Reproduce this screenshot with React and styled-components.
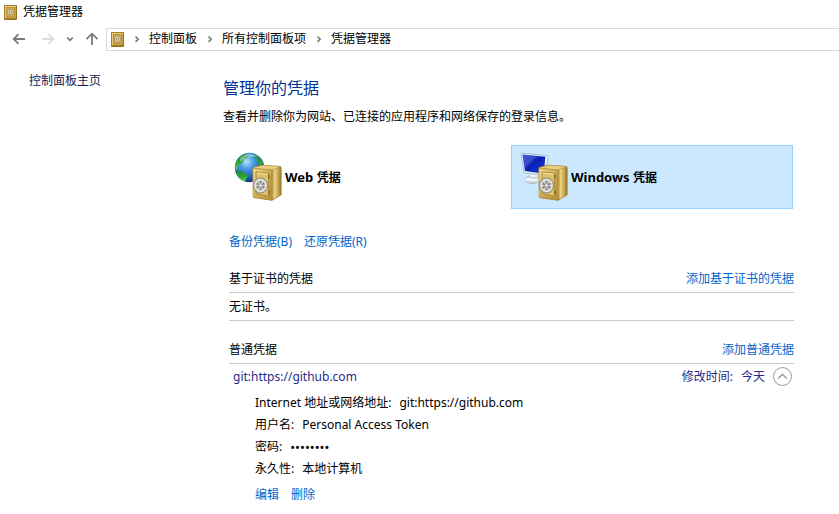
import React from "react";
import styled, { createGlobalStyle } from "styled-components";

const GlobalStyle = createGlobalStyle`
  *, *::before, *::after { box-sizing: border-box; }
  body {
    margin: 0;
    background: #fff;
    color: #000;
    font-family: "Noto Sans", "Noto Sans CJK SC", sans-serif;
    font-size: 12px;
    line-height: 20px;
  }
  h1, h2, p, dl, dd, dt, ol { margin: 0; padding: 0; }
  svg { display: block; flex: none; }
`;

const TitleBar = styled.header`
  display: flex;
  align-items: center;
  gap: 6px;
  height: 24px;
  padding-left: 4px;
`;

const NavBar = styled.nav`
  display: flex;
  align-items: center;
  height: 30px;
`;

const NavButtons = styled.div`
  display: flex;
  align-items: center;
  gap: 10px;
  width: 106px;
  flex: none;
  padding-left: 11px;
`;

const NavButton = styled.button`
  display: flex;
  align-items: center;
  justify-content: center;
  width: ${(p) => (p.$narrow ? "8px" : "16px")};
  height: 20px;
  padding: 0;
  border: 0;
  background: none;
  color: ${(p) => (p.disabled ? "#dcdcdc" : "#7b7b7b")};
`;

const NavGroup = styled.div`
  display: flex;
  gap: 13px;
`;

const Address = styled.ol`
  display: flex;
  align-items: center;
  flex: 1;
  height: 23px;
  padding-left: 4px;
  border: 1px solid #d9d9d9;
  border-right: 0;
  list-style: none;
`;

const Crumb = styled.li`
  display: flex;
  align-items: center;
  white-space: nowrap;
`;

const CrumbLink = styled.a`
  color: #000;
  text-decoration: none;
`;

const Separator = styled.span`
  display: flex;
  justify-content: center;
  width: 25px;
  color: #7b7b7b;
`;

const Body = styled.div`
  display: flex;
`;

const Sidebar = styled.aside`
  flex: none;
  width: 223px;
  padding: 17px 0 0 29px;
`;

const Main = styled.main`
  flex: 1;
  min-width: 0;
  padding: 22px 45px 8px 0;
`;

const Heading = styled.h1`
  color: #003399;
  font-size: 16px;
  font-weight: 400;
  line-height: 24px;
`;

const Intro = styled.p`
  margin-top: 7px;
`;

const Vaults = styled.div`
  display: grid;
  grid-template-columns: 1fr 1fr;
  gap: 4px;
  margin: 18px 1px 0 2px;
`;

const VaultButton = styled.button`
  display: flex;
  align-items: center;
  gap: 2px;
  height: 64px;
  padding: 0 8px;
  border: 1px solid ${(p) => (p.$selected ? "#99d1ff" : "transparent")};
  background: ${(p) => (p.$selected ? "#cce8ff" : "transparent")};
  color: #000;
  font: inherit;
  font-weight: 700;
`;

const Content = styled.div`
  padding-left: 6px;
`;

const Link = styled.a`
  color: ${(p) => (p.$dark ? "#151c55" : "#0066cc")};
  text-decoration: none;
`;

const Links = styled.div`
  display: flex;
  gap: 12px;
  margin-top: ${(p) => (p.$compact ? "5px" : "23px")};
`;

const Section = styled.section`
  margin-top: ${(p) => (p.$spaced ? "19px" : "17px")};
`;

const SectionHeader = styled.div`
  display: flex;
  justify-content: space-between;
  padding-bottom: 3px;
  border-bottom: 1px solid #cbcbcb;
`;

const SectionTitle = styled.h2`
  font-size: 12px;
  font-weight: 400;
`;

const EmptyRow = styled.p`
  padding: 4px 0 3px;
  border-bottom: 1px solid #cbcbcb;
`;

const EntryButton = styled.button`
  display: flex;
  align-items: center;
  width: 100%;
  height: 26px;
  padding: 0 1px 0 4px;
  border: 0;
  background: none;
  color: #272c86;
  font: inherit;
`;

const LargeText = styled.span`
  font-size: 13px;
`;

const Modified = styled.span`
  margin: 0 8px 0 auto;
`;

const Gap = styled.span`
  display: inline-block;
  width: 8px;
`;

const Details = styled.div`
  padding: 2px 0 0 26px;
`;

const DetailRow = styled.div`
  display: flex;
  gap: 8px;
  height: 22px;
  line-height: 22px;
`;

const DetailList = ({ items }) => (
  <dl>
    {items.map((item) => (
      <DetailRow key={item.label}>
        <dt>{item.label}:</dt>
        <dd>{item.large ? <LargeText>{item.value}</LargeText> : item.value}</dd>
      </DetailRow>
    ))}
  </dl>
);

const SmallSafe = () => (
  <svg width="13" height="15" viewBox="0 0 13 15" aria-hidden="true">
    <rect x="0" y="0" width="13" height="15" rx="1" fill="#94701f" />
    <rect x="0.7" y="0.7" width="11.3" height="12.6" fill="#c9a348" />
    <path d="M1 1h11v1H2v11H1z" fill="#e5cc7c" />
    <rect x="2.5" y="2.5" width="8" height="9" fill="#cfae5a" stroke="#b58e38" strokeWidth="0.8" />
    <circle cx="6.5" cy="7" r="3" fill="#e8dcae" stroke="#a08a4c" strokeWidth="0.8" />
    <circle cx="6.5" cy="7" r="1.6" fill="#96907c" />
    <circle cx="6.5" cy="7" r="0.7" fill="#f4f0dc" />
  </svg>
);

const Arrow = ({ up }) => (
  <svg width="14" height="14" viewBox="0 0 14 14" fill="none" stroke="currentColor" strokeWidth="1.8" aria-hidden="true">
    {up ? <path d="M7 13V2M1.5 7.2L7 1.7l5.5 5.5" /> : <path d="M13 7H2M6.5 2.2L1.7 7l4.8 4.8" />}
  </svg>
);

const ForwardArrow = () => (
  <svg width="14" height="14" viewBox="0 0 14 14" fill="none" stroke="currentColor" strokeWidth="1.8" aria-hidden="true">
    <path d="M1 7h11M7.5 2.2L12.3 7l-4.8 4.8" />
  </svg>
);

const Chevron = ({ down }) => (
  <svg width="8" height="8" viewBox="0 0 8 8" fill="none" stroke="currentColor" strokeWidth="1.6" aria-hidden="true">
    <path d={down ? "M1.2 2.6L4 5.4l2.8-2.8" : "M2.5 1.5L5.2 4.2l-2.7 2.7"} />
  </svg>
);

const CollapseIcon = () => (
  <svg width="20" height="20" viewBox="0 0 20 20" fill="none" aria-hidden="true">
    <circle cx="9.5" cy="9.5" r="9" stroke="#9a9a9a" />
    <path d="M5.3 11.5L9.5 7.3l4.2 4.2" stroke="#a0a0a0" strokeWidth="1.6" />
  </svg>
);

const Safe = ({ id }) => (
  <g>
    <defs>
      <linearGradient id={`${id}-front`} x1="0" y1="0" x2="1" y2="1">
        <stop offset="0" stopColor="#f1dd95" />
        <stop offset="0.5" stopColor="#d3b254" />
        <stop offset="1" stopColor="#b4903a" />
      </linearGradient>
      <linearGradient id={`${id}-side`} x1="0" y1="0" x2="1" y2="0">
        <stop offset="0" stopColor="#a8853a" />
        <stop offset="0.3" stopColor="#ead486" />
        <stop offset="0.65" stopColor="#cdab52" />
        <stop offset="1" stopColor="#9a7529" />
      </linearGradient>
      <radialGradient id={`${id}-wheel`}>
        <stop offset="0" stopColor="#ffffff" />
        <stop offset="0.55" stopColor="#8d9190" />
        <stop offset="0.8" stopColor="#e4e5e1" />
        <stop offset="1" stopColor="#8e8d83" />
      </radialGradient>
    </defs>
    <path d="M18.5 16Q19 14.5 29 12.8L46 14q1.6 0.5 1.6 2L47.6 43 38 48.8 19.5 46z" fill="#a07c31" />
    <path d="M19 15.8L29.5 13.3 46.8 14.7 37.5 17.8z" fill="#e4cd80" />
    <path d="M37.8 18l9.2-3V42.8L37.8 48z" fill={`url(#${id}-side)`} />
    <path d="M19 16.3L37.3 18.3v29.4L19 45z" fill={`url(#${id}-front)`} stroke="#bb9840" strokeWidth="0.7" />
    <path d="M22 19.8L34.6 21.3v23L22 42z" fill="#dcc06a" stroke="#a17d33" strokeWidth="0.8" />
    <path d="M23 21L33.8 22.3" stroke="#fff0b2" strokeWidth="0.8" />
    <path d="M35 22.5v4M35 38.5v4" stroke="#7d6228" strokeWidth="1.3" />
    <ellipse cx="26.5" cy="33.5" rx="7.2" ry="7.7" fill={`url(#${id}-wheel)`} stroke="#85837a" strokeWidth="0.6" />
    <ellipse cx="26.5" cy="33.5" rx="4.9" ry="5.3" fill="#8d8b83" stroke="#f2f2ed" strokeWidth="1" />
    <path d="M20.3 33.5h12.4M23.5 28l6 11M29.5 28l-6 11" stroke="#e3e5e5" strokeWidth="1.2" />
    <circle cx="26.5" cy="33.5" r="1.9" fill="#e5e7e7" stroke="#707576" strokeWidth="0.6" />
  </g>
);

const WebVaultIcon = () => (
  <svg width="49" height="50" viewBox="0 0 49 50" aria-hidden="true">
    <defs>
      <radialGradient id="globe" cx="0.4" cy="0.3" r="0.7">
        <stop offset="0" stopColor="#b4e3ff" />
        <stop offset="0.35" stopColor="#4a9de2" />
        <stop offset="0.75" stopColor="#1b60b8" />
        <stop offset="1" stopColor="#12377e" />
      </radialGradient>
      <linearGradient id="land" x1="0" y1="0" x2="0" y2="1">
        <stop offset="0" stopColor="#238b32" />
        <stop offset="0.6" stopColor="#2ea833" />
        <stop offset="1" stopColor="#72e044" />
      </linearGradient>
    </defs>
    <circle cx="15.5" cy="15.5" r="14.7" fill="url(#globe)" />
    <path d="M2 10C4 5 8 2.3 13 1.5L11 4l4-1-1 3-4 1-2 4-4 2-1 5-2-2z" fill="url(#land)" />
    <path d="M1.5 19l5.5 0 4 3 4 1-3 4-1 2.5C6 27.5 2.5 24 1.5 19z" fill="url(#land)" />
    <path d="M20 2c5 2 8 6 9.5 10L26 13l-3-3 1-3-4-2zM25 14l5 1-1 5-4-2z" fill="url(#land)" />
    <path d="M6 6c5-5 13-5 18-1-6-1-12 0-18 5z" fill="#d6f2ff" opacity="0.4" />
    <Safe id="web-safe" />
  </svg>
);

const WindowsVaultIcon = () => (
  <svg width="49" height="50" viewBox="0 0 49 50" aria-hidden="true">
    <defs>
      <linearGradient id="screen" x1="0" y1="0" x2="1" y2="1">
        <stop offset="0" stopColor="#2b48d6" />
        <stop offset="0.5" stopColor="#0a1fb4" />
        <stop offset="1" stopColor="#1c45d2" />
      </linearGradient>
      <linearGradient id="stand" x1="0" y1="0" x2="0" y2="1">
        <stop offset="0" stopColor="#a9b5bd" />
        <stop offset="0.5" stopColor="#f7fbfd" />
        <stop offset="1" stopColor="#b4bfc7" />
      </linearGradient>
    </defs>
    <ellipse cx="12.5" cy="27.5" rx="7.5" ry="4.2" fill="url(#stand)" stroke="#a5b2bc" strokeWidth="0.5" />
    <path d="M10 20l8 2-1 5-7-1z" fill="url(#stand)" />
    <path d="M1 2.2Q1 1 2.2 1L27 3.6 28.3 4.6 26 24 4 20.8z" fill="#e6eef4" stroke="#9cabba" strokeWidth="0.7" />
    <path d="M2.4 2.5L25.3 4.8 23.8 21.8 5 19z" fill="url(#screen)" />
    <path d="M2.4 2.5L18 4.1 4.6 16z" fill="#8ba3f2" opacity="0.25" />
    <Safe id="windows-safe" />
  </svg>
);

const crumbs = ["控制面板", "所有控制面板项", "凭据管理器"];

const details = [
  { label: "Internet 地址或网络地址", value: "git:https://github.com" },
  { label: "用户名", value: "Personal Access Token" },
  { label: "密码", value: "••••••••", large: true },
  { label: "永久性", value: "本地计算机" },
];

export default function App() {
  return (
    <>
      <GlobalStyle />
      <TitleBar>
        <SmallSafe />
        <span>凭据管理器</span>
      </TitleBar>
      <NavBar>
        <NavButtons>
          <NavGroup>
            <NavButton aria-label="后退"><Arrow /></NavButton>
            <NavButton aria-label="前进" disabled><ForwardArrow /></NavButton>
          </NavGroup>
          <NavButton aria-label="最近的位置" $narrow><Chevron down /></NavButton>
          <NavButton aria-label="向上"><Arrow up /></NavButton>
        </NavButtons>
        <Address>
          <SmallSafe />
          {crumbs.map((name) => (
            <Crumb key={name}>
              <Separator><Chevron /></Separator>
              <CrumbLink href="#">{name}</CrumbLink>
            </Crumb>
          ))}
        </Address>
      </NavBar>
      <Body>
        <Sidebar>
          <Link href="#" $dark>控制面板主页</Link>
        </Sidebar>
        <Main>
          <Heading>管理你的凭据</Heading>
          <Intro>查看并删除你为网站、已连接的应用程序和网络保存的登录信息。</Intro>
          <Vaults>
            <VaultButton aria-pressed="false">
              <WebVaultIcon />
              <span><LargeText>Web </LargeText>凭据</span>
            </VaultButton>
            <VaultButton aria-pressed="true" $selected>
              <WindowsVaultIcon />
              <span><LargeText>Windows </LargeText>凭据</span>
            </VaultButton>
          </Vaults>
          <Content>
            <Links>
              <Link href="#">备份凭据(B)</Link>
              <Link href="#">还原凭据(R)</Link>
            </Links>
            <Section>
              <SectionHeader>
                <SectionTitle>基于证书的凭据</SectionTitle>
                <Link href="#">添加基于证书的凭据</Link>
              </SectionHeader>
              <EmptyRow>无证书。</EmptyRow>
            </Section>
            <Section $spaced>
              <SectionHeader>
                <SectionTitle>普通凭据</SectionTitle>
                <Link href="#">添加普通凭据</Link>
              </SectionHeader>
              <EntryButton aria-expanded="true">
                <span>git:https://github.com</span>
                <Modified>修改时间:<Gap />今天</Modified>
                <CollapseIcon />
              </EntryButton>
              <Details>
                <DetailList items={details} />
                <Links $compact>
                  <Link href="#">编辑</Link>
                  <Link href="#">删除</Link>
                </Links>
              </Details>
            </Section>
          </Content>
        </Main>
      </Body>
    </>
  );
}
